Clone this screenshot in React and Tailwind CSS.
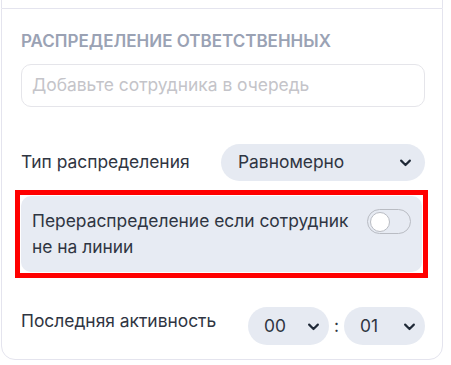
import React from 'react';

const Chevron = () => (
  <svg width="15" height="15" viewBox="0 0 24 24" fill="none" stroke="#1f2937" strokeWidth="3.4" strokeLinecap="round" strokeLinejoin="round">
    <path d="M5 9l7 7 7-7" />
  </svg>
);

const Pill = ({ value, className }) => (
  <div className={`flex items-center justify-between rounded-full bg-[#e6eaf2] ${className}`}>
    <span>{value}</span>
    <Chevron />
  </div>
);

const App = () => {
  return (
    <div className="min-h-[365px] bg-white font-['Inter',sans-serif] text-[17.4px] text-[#2f3542]">
      <div className="ml-px w-[442px]">
        <div className="h-2 border-x border-[#e4e4ee]" />
        <div className="rounded-b-[14px] border border-[#e4e4ee] pl-[19px] pr-[17px] pt-[21px] pb-[14px]">
          <h3 className="text-[17px] font-semibold uppercase leading-[22px] text-[#9aa2b4]">
            Распределение ответственных
          </h3>
          <div className="mt-[12px] flex h-[43px] items-center rounded-[10px] border border-[#e5e5ea] px-[10px] text-[#c4c4c9]">
            Добавьте сотрудника в очередь
          </div>

          <div className="mt-[37px] flex items-center justify-between">
            <span>Тип распределения</span>
            <Pill value="Равномерно" className="h-[37px] w-[204px] pl-[17px] pr-[12px]" />
          </div>

          <div className="-ml-[6px] -mr-[3px] mt-[9px] border-[5px] border-[#ff0000] p-px">
            <div className="flex items-start justify-between rounded-[10px] bg-[#e7ebf3] pl-[11px] pr-[11px] pt-[12px] pb-[12px]">
              <p className="w-[330px] leading-[26px]">
                Перераспределение если сотрудник не на линии
              </p>
              <div className="mt-[1px] flex h-[25px] w-[44px] shrink-0 items-center rounded-full border border-[#b9bcc3] px-[2px]">
                <div className="h-[20px] w-[20px] rounded-full border border-[#b9bcc3] bg-white" />
              </div>
            </div>
          </div>

          <div className="mt-[29px] flex items-start justify-between">
            <span className="pt-[1px]">Последняя активность</span>
            <div className="flex items-center gap-[5px]">
              <Pill value="00" className="h-[38px] w-[81px] pl-[16px] pr-[8px]" />
              <span>:</span>
              <Pill value="01" className="h-[38px] w-[81px] pl-[16px] pr-[8px]" />
            </div>
          </div>
        </div>
      </div>
    </div>
  );
};

export default App;
